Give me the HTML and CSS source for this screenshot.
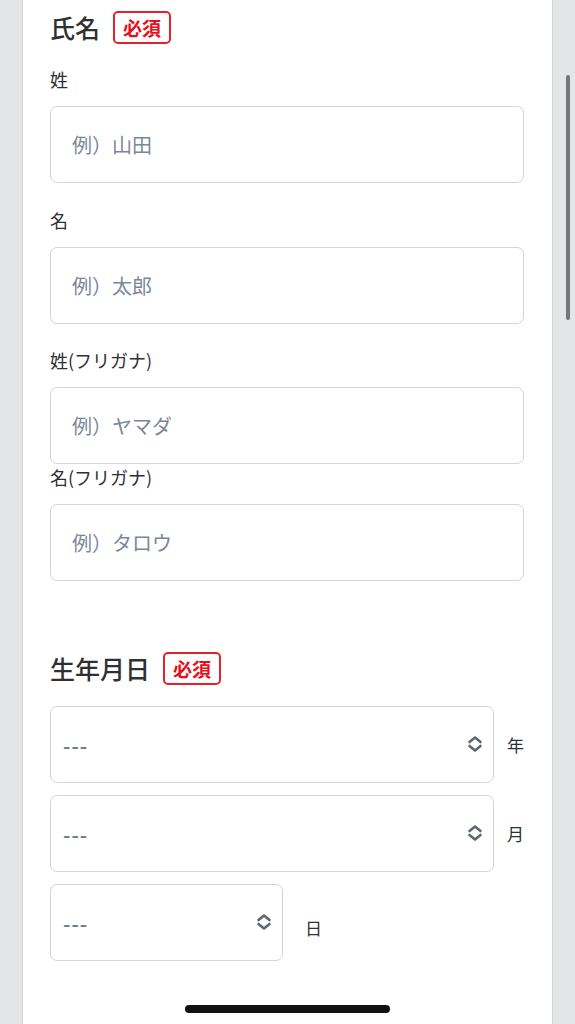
FILE: index.html
```html
<!DOCTYPE html>
<html lang="ja">
<head>
    <meta charset="UTF-8">
    <meta name="viewport" content="width=device-width, initial-scale=1.0">
    <title>会員登録フォーム</title>
    <link rel="stylesheet" href="styles.css">
</head>
<body>

<div class="form-card">
    <form id="entryForm">
        <div class="section-head first">
            <h2>氏名</h2>
            <span class="required">必須</span>
        </div>

        <div class="form-group">
            <label for="lastName">姓</label>
            <input type="text" id="lastName" name="lastName" placeholder="例）山田">
        </div>
        <div class="form-group">
            <label for="firstName">名</label>
            <input type="text" id="firstName" name="firstName" placeholder="例）太郎">
        </div>
        <div class="form-group tight">
            <label for="lastKana">姓(フリガナ)</label>
            <input type="text" id="lastKana" name="lastKana" placeholder="例）ヤマダ">
        </div>
        <div class="form-group">
            <label for="firstKana">名(フリガナ)</label>
            <input type="text" id="firstKana" name="firstKana" placeholder="例）タロウ">
        </div>

        <div class="section-head">
            <h2>生年月日</h2>
            <span class="required">必須</span>
        </div>

        <div class="date-row">
            <div class="select-wrap">
                <select id="birthYear" name="birthYear">
                    <option value="">---</option>
                </select>
                <svg class="chevrons" width="16" height="18" viewBox="0 0 16 18"><path d="M2.5 7 L8 2.5 L13.5 7 M2.5 11 L8 15.5 L13.5 11"/></svg>
            </div>
            <span class="unit">年</span>
        </div>
        <div class="date-row">
            <div class="select-wrap">
                <select id="birthMonth" name="birthMonth">
                    <option value="">---</option>
                </select>
                <svg class="chevrons" width="16" height="18" viewBox="0 0 16 18"><path d="M2.5 7 L8 2.5 L13.5 7 M2.5 11 L8 15.5 L13.5 11"/></svg>
            </div>
            <span class="unit">月</span>
        </div>
        <div class="date-row short">
            <div class="select-wrap">
                <select id="birthDay" name="birthDay">
                    <option value="">---</option>
                </select>
                <svg class="chevrons" width="16" height="18" viewBox="0 0 16 18"><path d="M2.5 7 L8 2.5 L13.5 7 M2.5 11 L8 15.5 L13.5 11"/></svg>
            </div>
            <span class="unit">日</span>
        </div>
    </form>
</div>

<!-- iOS overlays -->
<div class="scroll-thumb"></div>
<div class="home-indicator"></div>

</body>
</html>
```

FILE: styles.css
```css
body {
    font-family: "Noto Sans CJK JP", "Noto Sans", sans-serif;
    background-color: #e4e5e7;
    margin: 0;
    padding: 0;
    color: #2f3033;
    height: 1024px;
    overflow: hidden;
}

.form-card {
    background-color: #ffffff;
    margin: 0 22px;
    border-left: 1px solid #d3d5d8;
    border-right: 1px solid #d3d5d8;
    padding: 11px 28px 80px 27px;
    min-height: 1024px;
    box-sizing: border-box;
}

.section-head {
    display: flex;
    align-items: center;
    gap: 13px;
    height: 33px;
    margin-top: 71px;
}

.section-head.first {
    margin-top: 0;
}

.section-head h2 {
    margin: 0;
    font-size: 25px;
    font-weight: 500;
    line-height: 33px;
    color: #2f3033;
}

.required {
    display: inline-flex;
    align-items: center;
    justify-content: center;
    box-sizing: border-box;
    height: 33px;
    padding: 0 8px;
    border: 2px solid #e8202a;
    border-radius: 5px;
    color: #e60f1a;
    font-size: 19px;
    font-weight: 700;
}

.form-group {
    margin-top: 25px;
}

.section-head + .form-group {
    margin-top: 23px;
}

.form-group.tight {
    margin-top: 24px;
}

.form-group.tight + .form-group {
    margin-top: 1px;
}

.form-group label {
    display: block;
    font-size: 18px;
    line-height: 24px;
    margin-bottom: 15px;
    color: #2f3033;
}

.form-group input[type="text"] {
    display: block;
    width: 100%;
    height: 77px;
    box-sizing: border-box;
    padding: 0 21px;
    border: 1.5px solid #d2d4d7;
    border-radius: 7px;
    font-family: inherit;
    font-size: 20px;
    color: #2f3033;
    background: #ffffff;
    outline: none;
}

.form-group input::placeholder {
    color: #7a8797;
}

.date-row {
    display: flex;
    align-items: center;
    gap: 13px;
    margin-top: 12px;
}

.section-head + .date-row {
    margin-top: 21px;
}

.select-wrap {
    position: relative;
    width: 445px;
}

.date-row.short {
    gap: 22px;
}

.date-row.short .select-wrap {
    width: 233px;
}

.date-row.short .unit {
    margin-top: 10px;
}

.select-wrap select {
    display: block;
    width: 100%;
    height: 77px;
    box-sizing: border-box;
    padding: 0 40px 0 12px;
    border: 1.5px solid #d2d4d7;
    border-radius: 7px;
    background: #ffffff;
    font-family: "Noto Sans", sans-serif;
    font-size: 23px;
    letter-spacing: 1px;
    color: #707b89;
    appearance: none;
    -webkit-appearance: none;
    outline: none;
}

.chevrons {
    position: absolute;
    right: 11px;
    top: 29px;
    pointer-events: none;
}

.chevrons path {
    fill: none;
    stroke: #5c6775;
    stroke-width: 2.6;
    stroke-linecap: round;
    stroke-linejoin: round;
}

.unit {
    font-size: 17px;
    color: #2f3033;
}

.scroll-thumb {
    position: absolute;
    left: 566px;
    top: 75px;
    width: 4px;
    height: 245px;
    border-radius: 2px;
    background-color: #767676;
}

.home-indicator {
    position: absolute;
    left: 185px;
    top: 1005px;
    width: 205px;
    height: 8px;
    border-radius: 4px;
    background-color: #111111;
}
```
